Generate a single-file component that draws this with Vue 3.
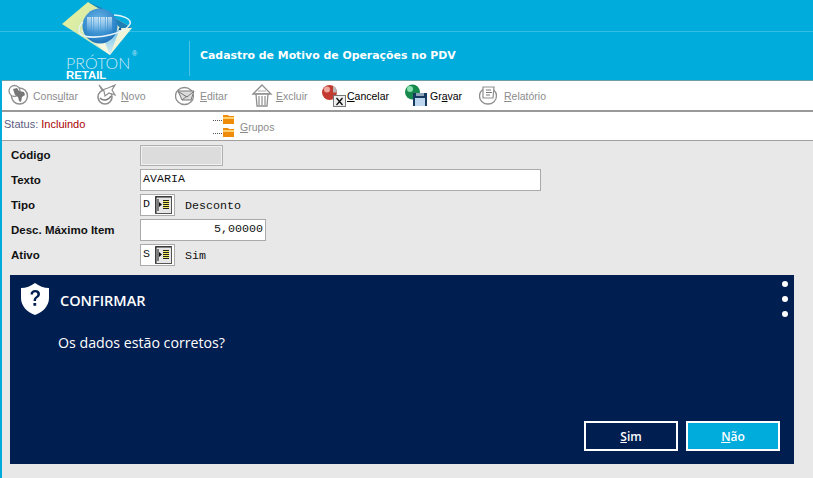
<template>
  <div class="screen">
    <header class="banner">
      <div class="banner-line"></div>
      <div class="logo">
        <svg class="logo-mark" width="78" height="58" viewBox="0 0 78 58">
          <defs>
            <linearGradient id="dia" x1="0" y1="0.3" x2="0.7" y2="0.8">
              <stop offset="0" stop-color="#e4f09a" />
              <stop offset="0.6" stop-color="#cfe8b4" />
              <stop offset="1" stop-color="#f0f4d8" />
            </linearGradient>
            <linearGradient id="low" x1="0" y1="0" x2="0" y2="1">
              <stop offset="0" stop-color="#6fc0e4" />
              <stop offset="1" stop-color="#d8eef6" />
            </linearGradient>
            <radialGradient id="ball" cx="0.45" cy="0.35" r="0.75">
              <stop offset="0" stop-color="#6db4e6" />
              <stop offset="0.65" stop-color="#2e88cc" />
              <stop offset="1" stop-color="#1a66aa" />
            </radialGradient>
            <linearGradient id="bars" x1="0" y1="0" x2="0" y2="1">
              <stop offset="0" stop-color="#e6f3fb" />
              <stop offset="1" stop-color="#e6f3fb" stop-opacity="0" />
            </linearGradient>
          </defs>
          <path d="M28 2 L72 28 L50 55 L2 24 Z" fill="url(#dia)" />
          <path d="M28 2 L72 28 L60 28 L42 8 Z" fill="#1f7fb4" />
          <path d="M44 42 L50 55 L60 28 Z" fill="url(#low)" />
          <path d="M20 30 L50 55 L44 40 Z" fill="#f4f8e0" />
          <circle cx="40" cy="26" r="17.5" fill="url(#ball)" />
          <path d="M28 17v15M30 17v15M32.500 17v15M35 17v15M37 17v15M39.500 17v15M42 17v15M44 17v15M46.500 17v15M49 17v15M51 17v15" stroke="url(#bars)" stroke-width="1.4" />
          <path d="M24 36 C40 40 66 32 70 24 C72 19 62 15 54 15" fill="none" stroke="#e8f4fa" stroke-width="1.6" />
          <path d="M24 36 C18 34 17 28 23 22" fill="none" stroke="#e8f4fa" stroke-width="1.2" />
          <circle cx="60" cy="29" r="1.3" fill="#1a5a98" />
        </svg>
        <div class="logo-name">PRÓTON</div>
        <div class="logo-reg">®</div>
        <div class="logo-sub">RETAIL</div>
      </div>
      <div class="title-wrap">
        <span class="title">Cadastro de Motivo de Operações no PDV</span>
      </div>
    </header>

    <div class="body">
      <nav class="toolbar">
        <div v-for="b in buttons" :key="b.key + b.post" class="tool" :class="{ on: b.on }" :style="{ width: b.w + 'px' }">
          <svg class="tool-icon" width="24" height="23" viewBox="0 0 24 23" v-html="b.icon"></svg>
          <span class="tool-label">{{ b.pre }}<u>{{ b.key }}</u>{{ b.post }}</span>
        </div>
      </nav>

      <div class="status-row">
        <div class="status"><span class="status-key">Status:</span> <span class="status-val">Incluindo</span></div>
        <div class="tree">
          <div class="tree-icons">
            <div class="tree-node"><i class="dots"></i><svg width="11" height="10" viewBox="0 0 11 10"><path d="M0 1h5l1 1h5v8H0z" fill="#f08c0c" /><path d="M0 3h11v2H0z" fill="#ffd070" /></svg></div>
            <div class="tree-node"><i class="dots"></i><svg width="11" height="10" viewBox="0 0 11 10"><path d="M0 1h5l1 1h5v8H0z" fill="#f08c0c" /><path d="M0 3h11v2H0z" fill="#ffd070" /></svg></div>
          </div>
          <span class="tree-label"><u>G</u>rupos</span>
        </div>
      </div>

      <section class="form">
        <div class="field">
          <label>Código</label>
          <div class="input code"></div>
        </div>
        <div class="field">
          <label>Texto</label>
          <div class="input text">AVARIA</div>
        </div>
        <div class="field">
          <label>Tipo</label>
          <div class="input pick"><span>D</span><svg width="17" height="18" viewBox="0 0 17 18" v-html="pickIcon"></svg></div>
          <span class="desc">Desconto</span>
        </div>
        <div class="field">
          <label>Desc. Máximo Item</label>
          <div class="input num">5,00000</div>
        </div>
        <div class="field">
          <label>Ativo</label>
          <div class="input pick"><span>S</span><svg width="17" height="18" viewBox="0 0 17 18" v-html="pickIcon"></svg></div>
          <span class="desc">Sim</span>
        </div>
      </section>

      <section class="dialog">
        <div class="dialog-head">
          <svg class="shield" width="28" height="32" viewBox="0 0 28 32">
            <path d="M14 0 C18 3 23 5 28 5 V15 C28 23 22 29 14 32 C6 29 0 23 0 15 V5 C5 5 10 3 14 0 Z" fill="#fff" />
            <path d="M9.500 11.500 C9.500 8.500 11.500 7 14.200 7 C17 7 19 8.600 19 11 C19 13 17.800 14 16.400 15 C15.300 15.800 15 16.400 15 18 H12.600 C12.600 15.800 13.200 14.700 14.600 13.700 C15.800 12.800 16.400 12.200 16.400 11.200 C16.400 10 15.500 9.200 14.200 9.200 C12.800 9.200 12 10.100 12 11.500 Z M12.400 20 H15.200 V22.800 H12.400 Z" fill="#001e50" />
          </svg>
          <h2>CONFIRMAR</h2>
          <div class="more"><i></i><i></i><i></i></div>
        </div>
        <p class="msg">Os dados estão corretos?</p>
        <div class="actions">
          <button class="btn"><u>S</u>im</button>
          <button class="btn primary"><u>N</u>ão</button>
        </div>
      </section>
    </div>
  </div>
</template>

<script setup>
const g = '#8f8f8f'
const globe = `<circle cx="11.500" cy="12" r="8" fill="#fff" stroke="${g}" stroke-width="1.5"/><circle cx="6.500" cy="7" r="5.500" fill="#fff" stroke="${g}" stroke-width="1.300"/><path d="M5 5l4-1 2 3 5 1 1 3-3 2-1 5-2-1-1-4-3-2z" fill="#777"/>`
const star = `<circle cx="9" cy="13" r="7" fill="#fff" stroke="${g}" stroke-width="1.600"/><path d="M3 1l3 5 6-2 7-3-3 5 3 5-6-2-4 3-1-5z" fill="#fff" stroke="${g}" stroke-width="1.200"/><path d="M4 14c3 3 8 3 11-2" fill="none" stroke="#777" stroke-width="1.400"/>`
const mail = `<ellipse cx="9.500" cy="12" rx="9" ry="8.500" fill="#fff" stroke="${g}" stroke-width="1.300"/><path d="M3 7h16l-3 9H7z" fill="#dcdcdc" stroke="#777"/><path d="M4 8l8 5 6-5M7 16l5-4" fill="none" stroke="#777"/>`
const trash = `<path d="M2 10l9-9 9 9z" fill="#fff" stroke="${g}" stroke-width="1.300"/><path d="M5 10h12l-1 12H6z" fill="#fff" stroke="${g}" stroke-width="1.300"/><path d="M8 12v9M11 12v9M14 12v9" stroke="#777"/><path d="M7 7h8" stroke="#aaa"/>`
const cancel = `<circle cx="7.500" cy="8.500" r="7.500" fill="#c23a30"/><circle cx="5" cy="5.500" r="3" fill="#eda8a0"/><path d="M11 2a7.500 7.500 0 0 1 4 6.500h-4z" fill="#b8b8b8"/><rect x="11.500" y="11.500" width="12" height="11" fill="#eee" stroke="#777"/><path d="M14.500 14l6 7M20.500 14l-6 7" stroke="#111" stroke-width="1.300"/>`
const save = `<circle cx="7.500" cy="8" r="7.500" fill="#168a4c"/><circle cx="5" cy="5" r="3" fill="#8ae0b0"/><rect x="8" y="9" width="14" height="13" fill="#173a60"/><rect x="10" y="14" width="10" height="8" fill="#bcd6ee"/><rect x="11" y="9" width="8" height="3" fill="#8fa4b8"/>`
const report = `<ellipse cx="9" cy="12" rx="8.500" ry="8" fill="#fff" stroke="${g}" stroke-width="1.300"/><path d="M4 3h11l-1 11H4z" fill="#fff" stroke="${g}" stroke-width="1.200"/><path d="M7 6h5M7 8.500h6M7 11h4" stroke="#777"/>`

const buttons = [
  { pre: 'Cons', key: 'u', post: 'ltar', w: 88, icon: globe },
  { pre: '', key: 'N', post: 'ovo', w: 79, icon: star },
  { pre: '', key: 'E', post: 'ditar', w: 76, icon: mail },
  { pre: '', key: 'E', post: 'xcluir', w: 71, icon: trash },
  { pre: '', key: 'C', post: 'ancelar', w: 83, icon: cancel, on: true },
  { pre: 'Gr', key: 'a', post: 'var', w: 74, icon: save, on: true },
  { pre: '', key: 'R', post: 'elatório', w: 80, icon: report },
]

const pickIcon = `<rect x=".5" y=".5" width="16" height="17" fill="#e6e6e6" stroke="#555"/><path d="M1 17V1h15" fill="none" stroke="#222"/><rect x="8" y="4" width="6" height="9" fill="#f4ec60"/><path d="M8 4.500h6M8 6.500h6M8 8.500h6M8 10.500h6M8 12.500h6" stroke="#222"/><path d="M4 6l3 2.500L4 11z" fill="#111"/><path d="M3 3v12" stroke="#111"/>`
</script>

<style>
html, body { margin: 0; background: #e8e8e8; overflow: hidden; }
</style>

<style scoped>
.screen { width: 813px; height: 478px; display: flex; flex-direction: column; background: #e8e8e8; font-family: "Liberation Sans", Arial, sans-serif; overflow: hidden; }

.banner { position: relative; height: 80px; flex: none; background: #00acdc; display: flex; align-items: flex-start; }
.banner-line { position: absolute; left: 0; right: 0; top: 31px; height: 1px; background: #33bde3; }
.logo { position: absolute; left: 0; top: 0; width: 189px; height: 80px; }
.logo-mark { position: absolute; left: 60px; top: 0; }
.logo-name { position: absolute; left: 66px; top: 56px; color: #cfeaf6; font: 300 16px/14px Lato, "Liberation Sans", sans-serif; white-space: nowrap; }
.logo-reg { position: absolute; left: 132px; top: 50px; color: #cfeaf6; font-size: 7px; line-height: 8px; }
.logo-sub { position: absolute; left: 66px; top: 70px; color: #fff; font-size: 11.400px; font-weight: 700; line-height: 10px; }
.title-wrap { margin: 41px 0 0 189px; height: 35px; border-left: 1px solid #4cc4e6; padding-left: 10px; position: relative; z-index: 1; }
.title { display: block; margin-top: 8px; color: #fff; font: 700 10.900px/14px "DejaVu Sans", Verdana, sans-serif; white-space: nowrap; }

.body { flex: 1; display: flex; flex-direction: column; border-left: 2px solid #00acdc; min-height: 0; }
.toolbar { height: 29px; flex: none; background: #fff; border-top: 1px solid #6da0a8; border-bottom: 2px solid #999; display: flex; align-items: center; padding-left: 6px; }
.tool { display: flex; align-items: center; gap: 1px; font-size: 10.500px; color: #8c8c8c; flex: none; white-space: nowrap; }
.tool.on { color: #000; }
.tool-icon { flex: none; }

.status-row { height: 28px; flex: none; background: #fff; border-bottom: 1px solid #a0a0a0; display: flex; font-size: 11px; position: relative; }
.status { padding: 6px 0 0 2px; width: 211px; flex: none; box-sizing: border-box; }
.status-key { color: #5c5c80; }
.status-val { color: #a80000; }
.tree { display: flex; align-items: center; gap: 6px; height: 26px; }
.tree-icons { display: flex; flex-direction: column; gap: 2px; }
.tree-node { display: flex; align-items: flex-end; height: 11px; }
.tree-node svg { margin-left: 1px; }
.dots { width: 9px; height: 1px; margin-bottom: 3px; border-bottom: 1px dotted #555; }
.tree-label { color: #8c8c8c; margin-top: 3px; font-size: 10.500px; }

.form { flex: none; padding: 2px 0 0 9px; height: 131px; box-sizing: border-box; display: flex; flex-direction: column; gap: 1px; }
.field { height: 24px; display: flex; align-items: center; flex: none; }
.field label { width: 129px; flex: none; font-size: 11.500px; font-weight: 700; color: #111; }
.input { box-sizing: border-box; border: 1px solid #aaa; background: #fff; height: 22px; font: 11.670px/18px "Liberation Mono", "Courier New", monospace; color: #111; padding: 0 2px; flex: none; }
.input.code { width: 83px; height: 21px; background: #dcdcdc; border: 1px solid #b0b0b0; outline: 1px solid #f0f0f0; outline-offset: -2px; }
.input.text { width: 401px; }
.input.num { width: 126px; text-align: right; }
.input.pick { width: 35px; display: flex; align-items: center; justify-content: space-between; padding-right: 2px; padding-left: 2px; }
.input.pick span { margin-top: -3px; }
.desc { margin: 2px 0 0 10px; font: 11.670px "Liberation Mono", "Courier New", monospace; color: #111; }

.dialog { flex: none; margin: 3px 0 0 8px; width: 784px; height: 189px; box-sizing: border-box; background: #001e50; color: #fff; font-family: "Open Sans", "Noto Sans", sans-serif; display: flex; flex-direction: column; padding: 0 14px 13px 11px; }
.dialog-head { display: flex; align-items: center; height: 50px; gap: 11px; position: relative; }
.shield { margin-top: -2px; }
.dialog-head h2 { margin: 0; font-size: 14.500px; font-weight: 600; }
.more { position: absolute; right: -8px; top: 6px; display: flex; flex-direction: column; gap: 9px; }
.more i { display: block; width: 6px; height: 6px; border-radius: 50%; background: #fff; }
.msg { margin: 8px 0 0 37px; font-size: 14.200px; line-height: 20px; }
.actions { margin-top: auto; display: flex; justify-content: flex-end; gap: 8px; }
.btn { width: 94px; height: 30px; box-sizing: border-box; border: 2px solid #fff; background: transparent; color: #fff; font: 600 12px "Open Sans", "Noto Sans", sans-serif; padding: 0; }
.btn.primary { background: #00acdc; }
</style>
